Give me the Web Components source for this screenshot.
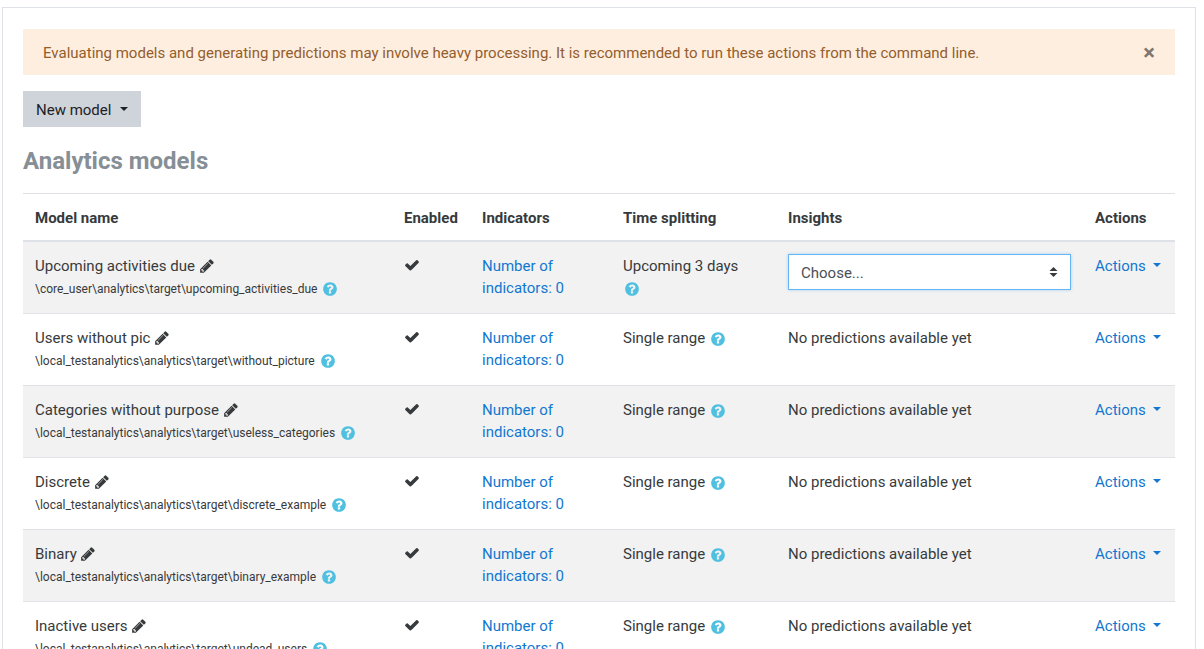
<!DOCTYPE html>
<html lang="en">
<head>
<meta charset="utf-8">
<title>Analytics models</title>
<style>
  html, body { margin: 0; height: 100%; overflow: hidden; background: #fff; }
  body { font: 15px/22px Roboto, "Liberation Sans", sans-serif; color: #373a3c; }
</style>
</head>
<body>
<models-page>
  <page-alert>Evaluating models and generating predictions may involve heavy processing. It is recommended to run these actions from the command line.</page-alert>
  <menu-button>New model</menu-button>
  <page-heading>Analytics models</page-heading>
  <models-table>
    <model-row stripe target="\core_user\analytics\target\upcoming_activities_due" time="Upcoming 3 days" wrap-time insights="select">Upcoming activities due</model-row>
    <model-row target="\local_testanalytics\analytics\target\without_picture">Users without pic</model-row>
    <model-row stripe target="\local_testanalytics\analytics\target\useless_categories">Categories without purpose</model-row>
    <model-row target="\local_testanalytics\analytics\target\discrete_example">Discrete</model-row>
    <model-row stripe target="\local_testanalytics\analytics\target\binary_example">Binary</model-row>
    <model-row target="\local_testanalytics\analytics\target\undead_users">Inactive users</model-row>
  </models-table>
</models-page>

<script>
const ICONS = {
  pencil: 'M491 1536l91-91-235-235-91 91v107h128v128h107zm523-928q0-22-22-22-10 0-17 7l-542 542q-7 7-7 17 0 22 22 22 10 0 17-7l542-542q7-7 7-17zm-54-192l416 416-832 832h-416v-416zm683 96q0 53-37 90l-166 166-416-416 166-165q36-38 90-38 53 0 91 38l235 234q37 39 37 91z',
  check: 'M1671 566q0 40-28 68l-724 724-136 136q-28 28-68 28t-68-28l-136-136-362-362q-28-28-28-68t28-68l136-136q28-28 68-28t68 28l294 295 656-657q28-28 68-28t68 28l136 136q28 28 28 68z',
  help: 'M1024 1376v-192q0-14-9-23t-23-9h-192q-14 0-23 9t-9 23v192q0 14 9 23t23 9h192q14 0 23-9t9-23zm256-672q0-88-55.5-163t-138.5-116-170-41q-243 0-371 213-15 24 8 42l132 100q7 6 19 6 16 0 25-12 53-68 86-92 34-24 86-24 48 0 85.5 26t37.5 59q0 38-20 61t-68 45q-63 28-115.5 86.5t-52.5 125.5v36q0 14 9 23t23 9h192q14 0 23-9t9-23q0-19 21.5-49.5t54.5-49.5q32-18 49-28.5t46-35 44.5-48 28-60.5 12.5-81zm384 192q0 209-103 385.5t-279.5 279.5-385.5 103-385.5-103-279.5-279.5-103-385.5 103-385.5 279.5-279.5 385.5-103 385.5 103 279.5 279.5 103 385.5z'
};

class faIcon extends HTMLElement {
  constructor() {
    super();
    this.shadowDOM = this.attachShadow({mode: 'open'});
  }

  connectedCallback() {
    const name = this.getAttribute('name');
    this.shadowDOM.innerHTML = `
      <style>
        :host {
          display: inline-block;
          width: 16px;
          height: 16px;
          vertical-align: -3px;
          color: #373a3c;
        }
        :host([name="help"]) { color: #4fc0e0; }
        svg { display: block; width: 100%; height: 100%; fill: currentColor; }
      </style>
      <svg viewBox="0 0 1792 1792"><path d="${ICONS[name]}"/></svg>
    `;
  }
}

class modelsPage extends HTMLElement {
  constructor() {
    super();
    this.shadowDOM = this.attachShadow({mode: 'open'});
    this.shadowDOM.innerHTML = `
      <style>
        :host {
          display: block;
          box-sizing: border-box;
          margin: 7px 0 0 2px;
          width: 1194px;
          height: 700px;
          padding: 21px 20px 0;
          border: 1px solid #dee2e6;
        }
      </style>
      <slot></slot>
    `;
  }
}

class pageAlert extends HTMLElement {
  constructor() {
    super();
    this.shadowDOM = this.attachShadow({mode: 'open'});
    this.shadowDOM.innerHTML = `
      <style>
        :host {
          display: flex;
          align-items: center;
          justify-content: space-between;
          height: 46px;
          padding: 2px 20px 0;
          box-sizing: border-box;
          background: #feeedf;
          color: #945d2c;
        }
        span {
          font-weight: 700;
          font-size: 22px;
          color: #000;
          opacity: .5;
        }
      </style>
      <slot></slot>
      <span>×</span>
    `;
  }
}

class menuButton extends HTMLElement {
  constructor() {
    super();
    this.shadowDOM = this.attachShadow({mode: 'open'});
    this.shadowDOM.innerHTML = `
      <style>
        :host {
          display: flex;
          align-items: center;
          gap: 9px;
          width: max-content;
          height: 36px;
          box-sizing: border-box;
          margin-top: 16px;
          padding: 2px 13px 0 13px;
          background: #ced4da;
          color: #1d2125;
        }
        i {
          border-top: 4.5px solid currentColor;
          border-left: 4.5px solid transparent;
          border-right: 4.5px solid transparent;
          margin-top: -3px;
        }
      </style>
      <slot></slot><i></i>
    `;
  }
}

class pageHeading extends HTMLElement {
  constructor() {
    super();
    this.shadowDOM = this.attachShadow({mode: 'open'});
    this.shadowDOM.innerHTML = `
      <style>
        :host {
          display: block;
          margin: 20px 0 18px;
          font-size: 24px;
          line-height: 28px;
          font-weight: 700;
          color: #868e96;
        }
      </style>
      <slot></slot>
    `;
  }
}

const COLUMNS = '369px 78px 141px 165px 307px 92px';

class modelsTable extends HTMLElement {
  constructor() {
    super();
    this.shadowDOM = this.attachShadow({mode: 'open'});
    this.shadowDOM.innerHTML = `
      <style>
        :host { display: block; border-top: 1px solid #dee2e6; }
        .head {
          display: grid;
          grid-template-columns: ${COLUMNS};
          height: 46px;
          box-sizing: content-box;
          align-items: center;
          border-bottom: 2px solid #dee2e6;
          font-weight: 700;
        }
        .head div { padding: 2px 12px 0; }
      </style>
      <div class="head">
        <div>Model name</div>
        <div>Enabled</div>
        <div>Indicators</div>
        <div>Time splitting</div>
        <div>Insights</div>
        <div>Actions</div>
      </div>
      <slot></slot>
    `;
  }
}

class modelRow extends HTMLElement {
  constructor() {
    super();
    this.shadowDOM = this.attachShadow({mode: 'open'});
  }

  connectedCallback() {
    const target = this.getAttribute('target');
    const time = this.getAttribute('time') || 'Single range';
    const breakTime = this.hasAttribute('wrap-time') ? '<br>' : ' ';
    const insights = this.getAttribute('insights') === 'select'
      ? `<div class="select">Choose...<svg width="9" height="12" viewBox="0 0 9 12"><path d="M4.5 1L8.5 5H.5zM4.5 11L.5 7h8z"/></svg></div>`
      : 'No predictions available yet';
    this.shadowDOM.innerHTML = `
      <style>
        :host {
          display: grid;
          grid-template-columns: ${COLUMNS};
          box-sizing: border-box;
          height: 72px;
          border-bottom: 1px solid #dee2e6;
        }
        :host([stripe]) { background: #f2f2f2; }
        .cell { padding: 13px 12px 0; }
        .target { font-size: 12px; padding-top: 1px; }
        a { color: #1177d1; text-decoration: none; }
        .select {
          display: flex;
          align-items: center;
          justify-content: space-between;
          box-sizing: border-box;
          height: 36px;
          margin-top: -1px;
          padding: 2px 12px 0;
          background: #fff;
          border: 1px solid #66b5f5;
          box-shadow: 0 0 3px rgba(102, 181, 245, .5);
          color: #495057;
        }
        .select svg { fill: #373a3c; margin-top: -2px; }
        .actions i {
          display: inline-block;
          margin-left: 3px;
          vertical-align: 4px;
          border-top: 4.5px solid currentColor;
          border-left: 4.5px solid transparent;
          border-right: 4.5px solid transparent;
        }
        fa-icon.help { margin-left: 2px; vertical-align: -4px; }
        .time fa-icon.help { margin-left: 1px; }
        fa-icon.check { vertical-align: -2px; }
      </style>
      <div class="cell">
        <div><slot></slot> <fa-icon name="pencil"></fa-icon></div>
        <div class="target">${target} <fa-icon class="help" name="help"></fa-icon></div>
      </div>
      <div class="cell"><fa-icon class="check" name="check"></fa-icon></div>
      <div class="cell"><a>Number of indicators: 0</a></div>
      <div class="cell time">${time}${breakTime}<fa-icon class="help" name="help"></fa-icon></div>
      <div class="cell">${insights}</div>
      <div class="cell actions"><a>Actions <i></i></a></div>
    `;
  }
}

customElements.define('fa-icon', faIcon);
customElements.define('models-page', modelsPage);
customElements.define('page-alert', pageAlert);
customElements.define('menu-button', menuButton);
customElements.define('page-heading', pageHeading);
customElements.define('models-table', modelsTable);
customElements.define('model-row', modelRow);
</script>
</body>
</html>
